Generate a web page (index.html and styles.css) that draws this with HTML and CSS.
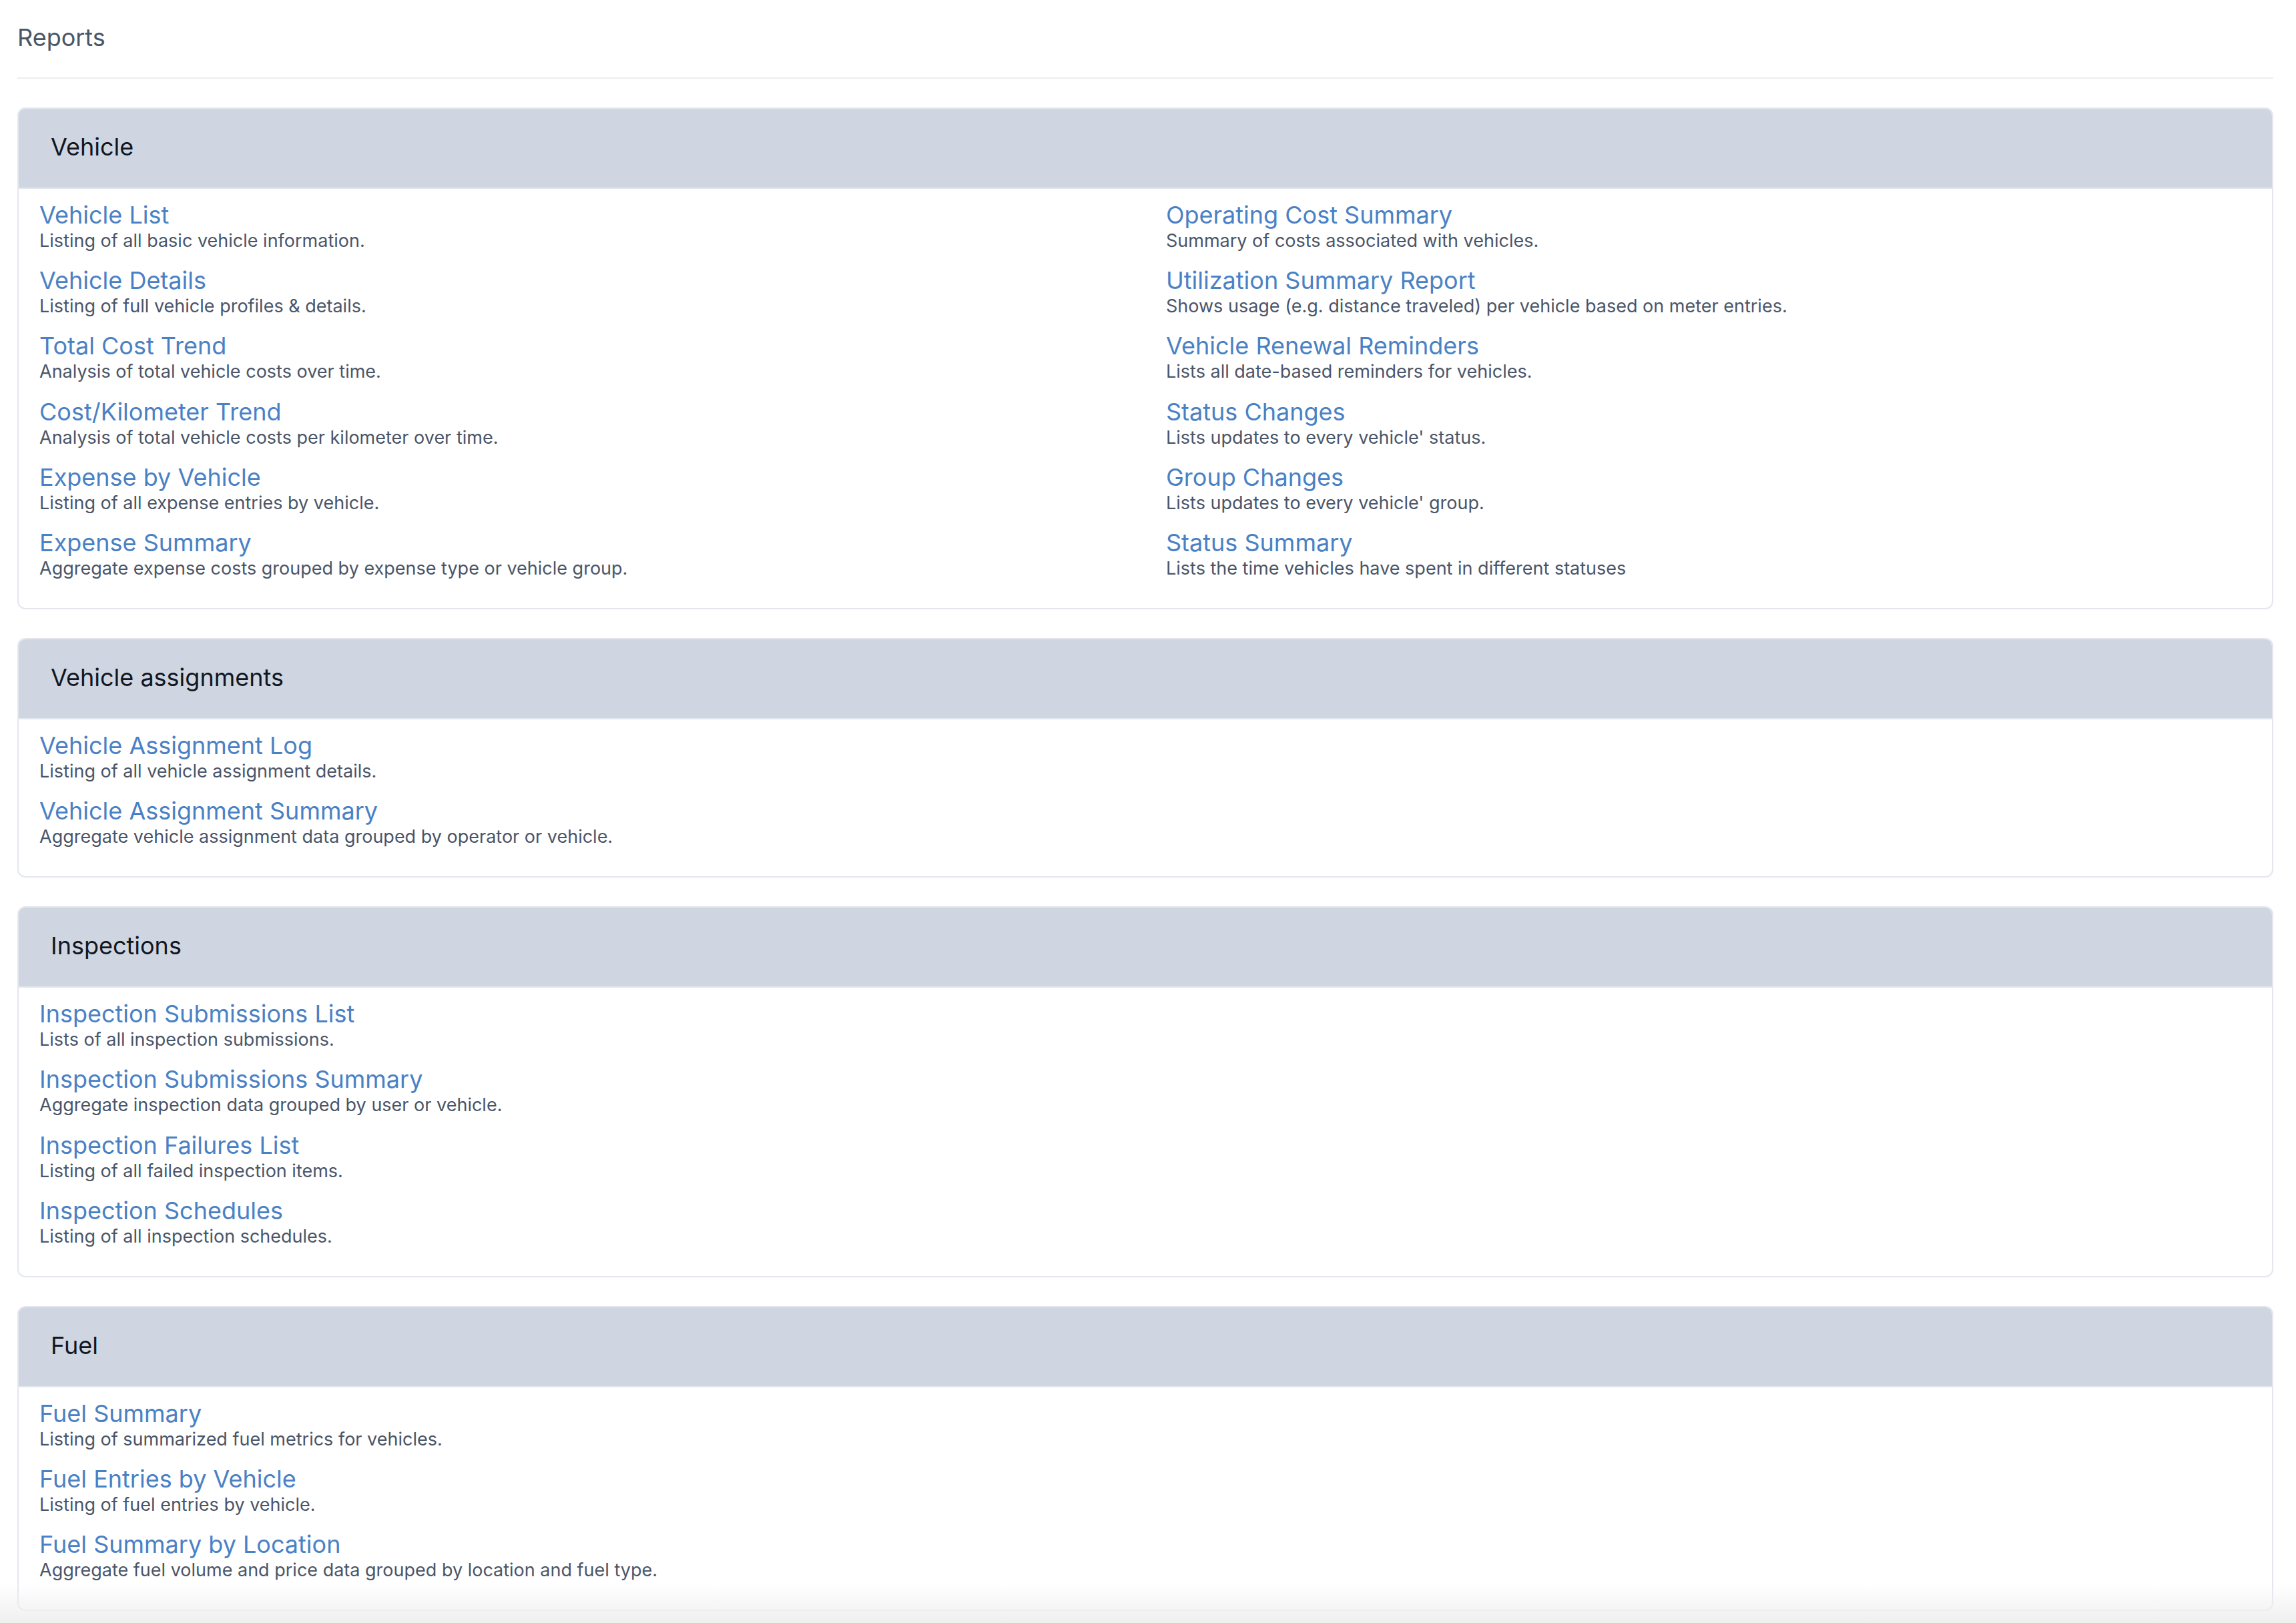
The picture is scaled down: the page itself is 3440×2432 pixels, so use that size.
FILE: index.html
```html
<!DOCTYPE html>
<html lang="en">
<head>
<meta charset="utf-8">
<title>Reports</title>
<link rel="stylesheet" href="styles.css">
</head>
<body>
<div class="page">
  <header class="page-header">
    <h1 class="page-title">Reports</h1>
  </header>

  <section class="card">
    <div class="card-header">Vehicle</div>
    <div class="card-body">
      <ul class="col">
        <li class="item"><a class="item-link" href="#">Vehicle List</a><p class="item-desc">Listing of all basic vehicle information.</p></li>
        <li class="item"><a class="item-link" href="#">Vehicle Details</a><p class="item-desc">Listing of full vehicle profiles &amp; details.</p></li>
        <li class="item"><a class="item-link" href="#">Total Cost Trend</a><p class="item-desc">Analysis of total vehicle costs over time.</p></li>
        <li class="item"><a class="item-link" href="#">Cost/Kilometer Trend</a><p class="item-desc">Analysis of total vehicle costs per kilometer over time.</p></li>
        <li class="item"><a class="item-link" href="#">Expense by Vehicle</a><p class="item-desc">Listing of all expense entries by vehicle.</p></li>
        <li class="item"><a class="item-link" href="#">Expense Summary</a><p class="item-desc">Aggregate expense costs grouped by expense type or vehicle group.</p></li>
      </ul>
      <ul class="col">
        <li class="item"><a class="item-link" href="#">Operating Cost Summary</a><p class="item-desc">Summary of costs associated with vehicles.</p></li>
        <li class="item"><a class="item-link" href="#">Utilization Summary Report</a><p class="item-desc">Shows usage (e.g. distance traveled) per vehicle based on meter entries.</p></li>
        <li class="item"><a class="item-link" href="#">Vehicle Renewal Reminders</a><p class="item-desc">Lists all date-based reminders for vehicles.</p></li>
        <li class="item"><a class="item-link" href="#">Status Changes</a><p class="item-desc">Lists updates to every vehicle' status.</p></li>
        <li class="item"><a class="item-link" href="#">Group Changes</a><p class="item-desc">Lists updates to every vehicle' group.</p></li>
        <li class="item"><a class="item-link" href="#">Status Summary</a><p class="item-desc">Lists the time vehicles have spent in different statuses</p></li>
      </ul>
    </div>
  </section>

  <section class="card">
    <div class="card-header">Vehicle assignments</div>
    <div class="card-body">
      <ul class="col">
        <li class="item"><a class="item-link" href="#">Vehicle Assignment Log</a><p class="item-desc">Listing of all vehicle assignment details.</p></li>
        <li class="item"><a class="item-link" href="#">Vehicle Assignment Summary</a><p class="item-desc">Aggregate vehicle assignment data grouped by operator or vehicle.</p></li>
      </ul>
    </div>
  </section>

  <section class="card">
    <div class="card-header">Inspections</div>
    <div class="card-body">
      <ul class="col">
        <li class="item"><a class="item-link" href="#">Inspection Submissions List</a><p class="item-desc">Lists of all inspection submissions.</p></li>
        <li class="item"><a class="item-link" href="#">Inspection Submissions Summary</a><p class="item-desc">Aggregate inspection data grouped by user or vehicle.</p></li>
        <li class="item"><a class="item-link" href="#">Inspection Failures List</a><p class="item-desc">Listing of all failed inspection items.</p></li>
        <li class="item"><a class="item-link" href="#">Inspection Schedules</a><p class="item-desc">Listing of all inspection schedules.</p></li>
      </ul>
    </div>
  </section>

  <section class="card">
    <div class="card-header">Fuel</div>
    <div class="card-body">
      <ul class="col">
        <li class="item"><a class="item-link" href="#">Fuel Summary</a><p class="item-desc">Listing of summarized fuel metrics for vehicles.</p></li>
        <li class="item"><a class="item-link" href="#">Fuel Entries by Vehicle</a><p class="item-desc">Listing of fuel entries by vehicle.</p></li>
        <li class="item"><a class="item-link" href="#">Fuel Summary by Location</a><p class="item-desc">Aggregate fuel volume and price data grouped by location and fuel type.</p></li>
      </ul>
    </div>
  </section>
</div>
<div class="bottom-fade"></div>
</body>
</html>
```

FILE: styles.css
```css
* { box-sizing: border-box; }

html, body {
  margin: 0;
  padding: 0;
  background: #ffffff;
}

body {
  font-family: Inter, "Noto Sans", "Liberation Sans", sans-serif;
  color: #4a5568;
}

.page {
  padding: 0 34px 60px 26px;
}

.page-header {
  padding: 35px 0 38px;
  border-bottom: 2px solid #eceef1;
}

.page-title {
  margin: 0;
  font-size: 36px;
  line-height: 43px;
  font-weight: 400;
  color: #4a5568;
}

.card {
  margin-top: 43px;
  border: 2px solid #e3e7ed;
  border-radius: 12px;
  overflow: hidden;
  background: #ffffff;
}

.card-header {
  background: #cfd6e1;
  border-bottom: 2px solid #e2e7ee;
  padding: 35px 48px 39px;
  font-size: 36px;
  line-height: 44px;
  color: #111622;
}

.card-body {
  display: grid;
  grid-template-columns: 1fr 1fr;
  padding: 17px 0 42px;
}

.col {
  list-style: none;
  margin: 0;
  padding: 0 31px;
  display: flex;
  flex-direction: column;
  gap: 20.2px;
}

.item {
  display: flex;
  flex-direction: column;
  align-items: flex-start;
}

.item-link {
  font-size: 36px;
  line-height: 44px;
  color: #4a81c4;
  text-decoration: none;
}

.item-desc {
  margin: 0;
  font-size: 27px;
  line-height: 34px;
  color: #4a5568;
}

.bottom-fade {
  position: fixed;
  left: 0;
  right: 0;
  bottom: 0;
  height: 58px;
  background: linear-gradient(to bottom, rgba(239, 239, 239, 0), #efefef);
  pointer-events: none;
}
```
